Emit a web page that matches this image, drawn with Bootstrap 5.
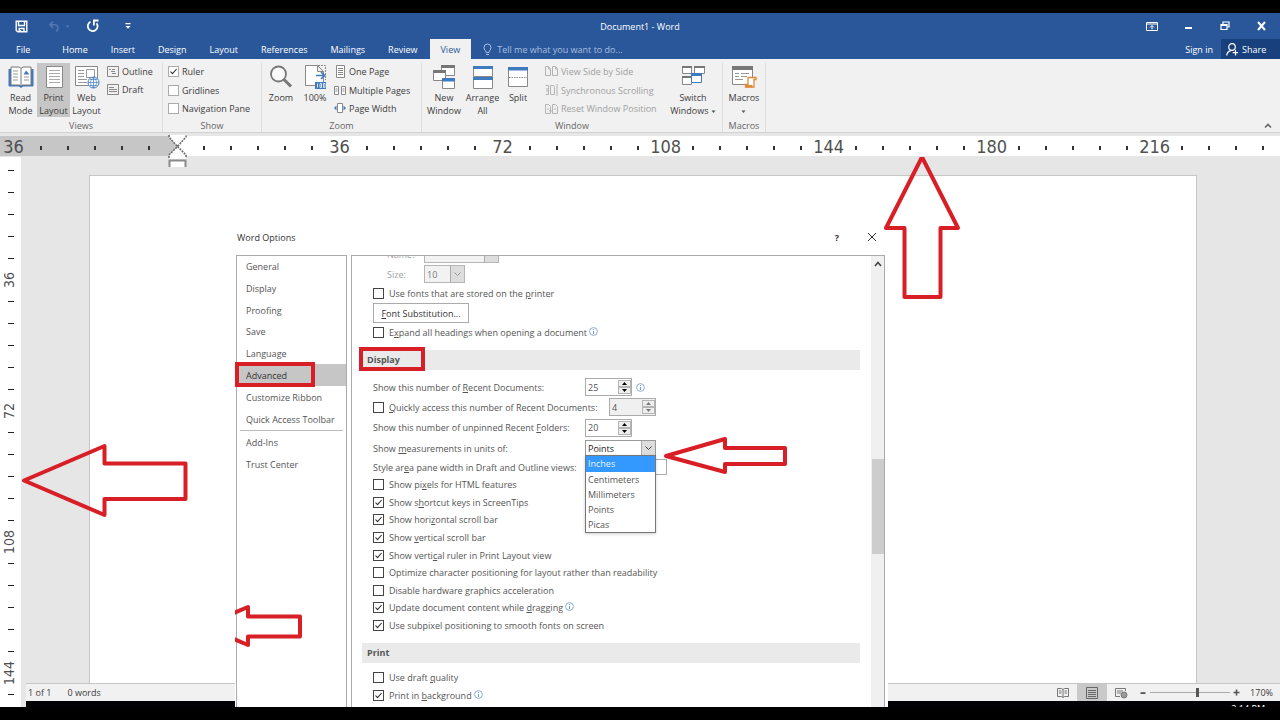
<!DOCTYPE html>
<html lang="en">
<head>
<meta charset="utf-8">
<meta name="viewport" content="width=device-width, initial-scale=1">
<title>Document1 - Word</title>
<link href="https://cdn.jsdelivr.net/npm/bootstrap@5.3.0/dist/css/bootstrap.min.css" rel="stylesheet">
<style>
:root{--blue:#2a579a;--ink:#3c3c3c;--soft:#555;--red:#d91f26}
body{font-family:"Open Sans","Noto Sans",sans-serif;font-size:9px;line-height:13px;color:var(--ink);background:#000;overflow:hidden}
button{color:inherit;line-height:inherit}
.app-shell{padding:13px 0;height:100vh}
/* title bar and tabs */
.title-bar,.tab-bar{background:var(--blue);color:#fff}
.title-bar{display:grid;grid-template-columns:1fr auto 1fr;height:26px}
.title-bar .plain{padding:0;border:0;background:none;display:flex}
.quick{gap:16px;padding-left:15px}
.undo-btn{width:26px;padding-left:4px!important}
.win-ctl{gap:25px;padding-right:12px}
.tab-bar{height:20px}
.tab-link{color:#fff;text-decoration:none;padding:0 11px 0 12px;display:flex;align-items:center}
.tab-link.file-tab{padding:0 20px 0 16px}
.tab-link.current{background:#f1f1f1;color:var(--blue);padding:0 11px;margin-left:1px}
.tell-box{gap:5px}
.tell{color:#a9bfdf;background:none;border:0;padding:0;width:180px;font-size:9px}
.tell::placeholder{color:#a9bfdf;opacity:1}
.share{background:#17407c;color:#fff;border:0;width:59px;padding:0 0 0 5px}
/* ribbon */
.ribbon{background:#f1f1f1;height:74px;border-bottom:1px solid #d2d2d2;flex:none}
.rib-group{border-right:1px solid #dcdcdc;margin:4px 0 0;display:flex;flex-direction:column;flex:none}
.rib-group>footer{text-align:center;color:#666;height:13px}
.rib-body{display:flex;flex:1 1 0;min-height:0}
.g-views{width:163px}.g-show{width:99px}.g-zoom{width:160px}.g-window{width:301px}.g-macros{width:43px}
.g-show .rib-body{padding-left:5px}
.big{border:0;background:none;padding:2px 0 0;text-align:center;display:flex;flex-direction:column;align-items:center;justify-content:flex-start;height:54px;flex:none;white-space:nowrap}
.big>svg{margin-bottom:2px;flex:none}
.big.on{background:#c6c6c6}
.w-33{width:33px}.w-38{width:38px}.w-44{width:44px}.w-30{width:30px}.w-58{width:58px}
.small-col{display:flex;flex-direction:column;height:56px;margin-top:-1px}
.small-col.two{height:37px}
.small-col>*{flex:1 1 0;display:flex;align-items:center;gap:3px;white-space:nowrap;border:0;background:none;padding:0;text-align:left}
.small-col input{appearance:none;width:11px;height:11px;border:1px solid #ababab;background:#fff;margin:0}
.small-col input:checked,.opt input:checked{background:#fff url("data:image/svg+xml,%3Csvg xmlns='http://www.w3.org/2000/svg' viewBox='0 0 9 9'%3E%3Cpath d='M1.5 4.5l2 2.2L7.6 2' fill='none' stroke='%23333' stroke-width='1.1'/%3E%3C/svg%3E") center/9px no-repeat}
.dim{color:#a0a0a0}
.collapse-btn{margin:0 8px 3px}
/* rulers */
.ruler-x{height:24px;padding:3px 0 1px;background:#e6e6e6;flex:none;position:relative;z-index:1}
.ruler-x .strip{display:flex;height:20px;overflow:hidden;background:linear-gradient(90deg,#c6c6c6 177px,#fff 177px)}
.seg-x{display:flex;width:163px;flex:none;color:#505050;font-family:"DejaVu Sans Condensed","DejaVu Sans",sans-serif;font-size:18px;line-height:18px;padding-top:2px}
.seg-x>*{flex:1 1 0;display:flex;justify-content:center;align-items:center;min-width:0;font-weight:400}
.seg-x i{width:2px;height:4px;background:#333;margin-top:2px}
.indent{position:absolute;left:168px;top:1px}
.ruler-y{width:21px;background:#fff;overflow:hidden;flex:none;padding-top:3px}
.seg-y{display:flex;flex-direction:column;height:131px;color:#505050;font-family:"DejaVu Sans Condensed","DejaVu Sans",sans-serif;font-size:14px;line-height:18px}
.seg-y>*{flex:1 1 0;min-height:0;display:flex;justify-content:center;align-items:center}
.seg-y b{writing-mode:vertical-rl;rotate:180deg;font-weight:400;margin-right:3px}
.seg-y i{width:6px;height:1px;background:#222}
/* workspace */
.work{position:relative;overflow:hidden;min-height:0}
.desk{background:#e6e6e6;padding:18px 83px 0 68px;min-height:0}
.sheet{background:#fff;border:1px solid #c6c6c6;border-bottom:0}
.status{background:#f1f1f1;border-top:1px solid #c6c6c6;height:18px;margin-left:5px;padding-left:2px;flex:none}
.task{height:6px;background:#020206;margin-left:5px;color:#fff;overflow:hidden;line-height:15px;padding-right:15px;flex:none}
.side-strip{background:#e6e6e6}
.status-tools{padding-right:7px}
.status button{border:0;background:none;padding:0}
.status button.view-on{background:#c9c9c9;width:30px}
.status .z-out{margin:0 4px 0 12px}
.status .z-in{margin:0 10px 0 3px}
.zoombar{appearance:none;background:linear-gradient(#aaa,#aaa) center/100% 1px no-repeat;width:80px;height:14px;margin:0}
.zoombar::-webkit-slider-thumb{appearance:none;width:3px;height:9px;background:#555}
/* options window */
.dlg{position:absolute;left:235px;top:71px;width:653px;bottom:0;background:#fff;color:var(--soft);overflow:hidden;padding:0 3px 0 1px}
.dlg-head{height:27px;color:#333;flex:none;padding:0 8px 9px 1px}
.dlg-head button{border:0;background:none;padding:0;display:flex}
.dlg-body{min-height:0}
.cats{width:111px;border:1px solid #ababab;border-bottom:0;flex:none}
.cats a{color:inherit;text-decoration:none;display:flex;align-items:center;padding-left:9px;height:22px;white-space:nowrap}
.cats .first{height:130px}
.cats .first a{flex:1 1 0;height:auto}
.cats a.sel{background:#c6c6c6;color:#333;position:relative}
.cats hr{margin:0 3px;border-color:#bbb;opacity:1}
.hi{position:absolute;border:4px solid var(--red)}
.hi-adv{left:-2px;top:-2px;width:80px;height:25px}
.hi-dis{left:-3px;top:-3px;width:66px;height:24px}
.pane{border:1px solid #ababab;border-bottom:0;margin-left:4px;min-width:0}
.opts{padding:0 11px 0 10px;overflow:hidden}
.opt{display:flex;align-items:center;height:20px;padding-left:11px;flex:none;white-space:nowrap}
.opt.h18{height:18px}
.opt.h21{height:21px}
.opt.scrolled{margin-top:-12px}
.opt input[type=checkbox]{appearance:none;width:11px;height:11px;border:1px solid #444;background-color:#fff;margin:0 5px 0 0;flex:none}
.opt svg.tip{margin:-2px 0 0 2px}
.sec{background:#eaeaea;height:20px;font-size:9px;line-height:19px;font-weight:700;padding-left:5px;margin:9px 0 7px;flex:none;position:relative}
.sec.tight{margin-bottom:5px}
.nine{height:158px;display:flex;flex-direction:column}
.nine .opt{flex:1 1 0;height:auto}
.lead-text{width:212px}
.quick-count{width:236px}
.font-lbl{width:51px;padding-left:14px}
.spin{display:flex;border:1px solid #ababab;width:47px;height:18px;background:#fff}
.spin input{border:0;background:none;padding:0 0 0 2px;width:32px;color:inherit;font-size:9px;min-width:0}
.spin .arrows{display:flex;flex-direction:column;width:13px;padding:1px 0}
.spin button{border:1px solid #b4b4b4;background:#eee;flex:1 1 0;padding:0;line-height:0;min-height:0;display:flex;align-items:center;justify-content:center}
.spin.off{background:#f0f0f0}
.combo{position:relative;display:flex}
.combo select{appearance:none;border:1px solid #999;border-radius:0;background:#fff;color:#222;font-size:9px;padding:0 0 0 2px;width:71px;height:16px}
.combo .drop{position:absolute;right:1px;top:1px;bottom:1px;width:14px;background:#ddd;border-left:1px solid #aaa;display:flex;align-items:center;justify-content:center;pointer-events:none}
.combo select:disabled{background:#f2f2f2;color:#777;border-color:#b5b5b5;opacity:1;height:18px}
.combo .sel-name{width:75px}
.combo .sel-size{width:41px}
.menu{position:absolute;left:0;top:15px;width:71px;border:1px solid #777;background:#fff;z-index:2;list-style:none;margin:0;padding:0;box-shadow:0 1px 3px #0003}
.menu li{height:15px;line-height:15px;padding-left:2px}
.menu li.act{background:#3399ff;color:#e8f3ff;height:16px;line-height:16px}
.width-box{border:1px solid #ababab;width:82px;height:16px;padding:0}
.fsub{border:1px solid #ababab;background:#fff;color:#333;height:20px;width:96px;padding:0;margin:1px 0 0 11px;flex:none}
.bar{width:13px;background:#f0f0f0;flex:none;display:flex;flex-direction:column;align-items:center;padding-top:5px}
.bar .thumb{height:95px;width:12px;background:#cdcdcd;margin-top:192px}
/* red call-out arrows drawn over the windows */
.note-arrow{position:absolute;fill:none;stroke:var(--red);stroke-width:4;stroke-linejoin:round;pointer-events:none;z-index:3}
.na-nav{left:0;top:374px}
.na-menu{left:427px;top:207px}
.na-left{left:20px;top:284px}
.na-up{left:880px;top:-4px}
u{text-underline-offset:1px}
</style>
</head>
<body>
<div class="app-shell d-flex flex-column">
<header class="flex-shrink-0">
 <div class="title-bar align-items-center">
  <div class="quick d-flex align-items-center">
   <button class="plain" aria-label="Save"><svg width="13" height="13" viewBox="0 0 13 13" fill="none" stroke="#fff" stroke-width="1.4"><path d="M1.2 1.2h10.600v10.600h-9L1.200 10.500zM3.500 1.500v4h6v-4M4.200 12V8.500h4.800V12"/><path d="M5.500 10v2"/></svg></button>
   <button class="plain undo-btn" aria-label="Undo"><svg width="24" height="13" viewBox="0 0 24 13" fill="none" stroke="#5578b2" stroke-width="1.600"><path d="M5.500 1L2 4.500l3.500 3.500M2 4.500h5c5 0 5 6 1.500 7"/><path d="M19.500 5.500h4l-2 2.300z" fill="#5578b2" stroke="none"/></svg></button>
   <button class="plain" aria-label="Redo"><svg width="14" height="14" viewBox="0 0 14 14" fill="none" stroke="#fff" stroke-width="1.800"><path d="M4.500 2.800A4.900 4.900 0 1 0 10.600 4.200M12.500 1.500H7.900v5"/></svg></button>
   <button class="plain ms-2" aria-label="Customize"><svg width="8" height="8" viewBox="0 0 8 8" fill="#fff"><path d="M1.500 1h5v1.200h-5zM1.500 4h5L4 6.800z"/></svg></button>
  </div>
  <div>Document1 - Word</div>
  <div class="win-ctl d-flex align-items-center justify-content-end">
   <button class="plain" aria-label="Ribbon display"><svg width="12" height="9" viewBox="0 0 12 9" fill="none" stroke="#fff"><path d="M.5.5h11v8H.5zM.5 2h11M6 7.500V4M4 5.500l2-2 2 2"/></svg></button>
   <button class="plain" aria-label="Minimize"><svg width="12" height="9" viewBox="0 0 12 9"><path d="M2 5h7v2H2z" fill="#fff"/></svg></button>
   <button class="plain" aria-label="Restore"><svg width="10" height="10" viewBox="0 0 10 10" fill="none" stroke="#fff" stroke-width="1.200"><path d="M1 3.500h6v5H1zM3 3V1h6v5H7.500M1 4.500h6"/></svg></button>
   <button class="plain" aria-label="Close"><svg width="13" height="10" viewBox="0 0 13 10" stroke="#fff" stroke-width="2"><path d="M3 1l7 8M10 1L3 9"/></svg></button>
  </div>
 </div>
 <nav class="tab-bar d-flex">
  <a class="tab-link file-tab" href="#">File</a><a class="tab-link" href="#">Home</a><a class="tab-link" href="#">Insert</a><a class="tab-link" href="#">Design</a><a class="tab-link" href="#">Layout</a><a class="tab-link" href="#">References</a><a class="tab-link" href="#">Mailings</a><a class="tab-link" href="#">Review</a><a class="tab-link current" href="#">View</a>
  <label class="tell-box d-flex align-items-center ms-2 ps-1"><svg width="9" height="13" viewBox="0 0 9 13" fill="none" stroke="#a9bfdf"><path d="M3 9.500C3 7.500 1 7 1 4.500a3.500 3.500 0 0 1 7 0C8 7 6 7.500 6 9.500zM3 11.500h3"/></svg><input class="tell" placeholder="Tell me what you want to do..." aria-label="Tell me what you want to do"></label>
  <a class="tab-link ms-auto px-2" href="#">Sign in</a>
  <button class="share d-flex align-items-center gap-1"><svg width="12" height="13" viewBox="0 0 12 13" fill="none" stroke="#fff" stroke-width="1.200"><circle cx="6" cy="4" r="3.300"/><path d="M.7 12.500C1 9 3 8 5 7.600M9.500 7v5.500M6.700 9.700h5.300"/></svg>Share</button>
 </nav>
 <div class="ribbon d-flex">
  <section class="rib-group g-views">
   <div class="rib-body">
    <button class="big w-33 ms-1"><svg width="26" height="24" viewBox="0 0 26 24" fill="#fff" stroke="#777"><path d="M1 4v17h10l2 1.500 2-1.500h10V4" fill="#3f7ac0" stroke="#3f7ac0"/><path d="M3 2h8l2 1.500L15 2h8v18h-8.500L13 21l-1.500-1H3zM13 4v16"/><path d="M5 6h5M5 9h5M5 12h5M5 15h5M16 12h5M16 15h5" stroke="#999"/><path d="M15.500 9.500l2.500-4 3.500 4z" fill="#3f7ac0" stroke="none"/></svg><span>Read<br>Mode</span></button>
    <button class="big on w-33"><svg width="20" height="24" viewBox="0 0 20 24" fill="#fff" stroke="#888"><path d="M2.500 1.500h16v21h-16z"/><path d="M5 5.500h11M5 8.500h11M5 11.500h11M5 14.500h11M5 17.500h11" stroke="#aaa"/></svg><span>Print<br>Layout</span></button>
    <button class="big w-33"><svg width="26" height="24" viewBox="0 0 26 24" fill="#fff" stroke="#888"><path d="M1.500 1.500h22v19h-22z"/><path d="M4 5.500h6M4 8.500h6M4 11.500h6M4 14.500h9M4 17.500h9" stroke="#999"/><path d="M12.500 4.500h8v8h-8z" stroke="#999"/><circle cx="19.500" cy="17.500" r="5.500" stroke="#3f7ac0"/><path d="M14 17.500h11M19.500 12v11M16 14.500h7M16 20.500h7M19.500 12c-4 4-4 7 0 11M19.500 12c4 4 4 7 0 11" fill="none" stroke="#3f7ac0" stroke-width=".7"/></svg><span>Web<br>Layout</span></button>
    <div class="small-col two ms-1">
     <button><svg width="12" height="11" viewBox="0 0 12 11" fill="none" stroke="#888"><path d="M.5.5h11v10H.5zM2 3.500h2M4 5.500h4M5 7.500h4M5 3.500h3"/></svg>Outline</button>
     <button><svg width="12" height="11" viewBox="0 0 12 11" fill="none" stroke="#888"><path d="M.5.5h11v10H.5zM2 3.500h5M2 5.500h8M2 7.500h8"/></svg>Draft</button>
    </div>
   </div><footer>Views</footer>
  </section>
  <section class="rib-group g-show">
   <div class="rib-body"><div class="small-col">
    <label><input type="checkbox" checked>Ruler</label><label><input type="checkbox">Gridlines</label><label><input type="checkbox">Navigation Pane</label>
   </div></div><footer>Show</footer>
  </section>
  <section class="rib-group g-zoom">
   <div class="rib-body">
    <button class="big w-38"><svg width="24" height="24" viewBox="0 0 24 24" fill="#fafafa" stroke="#777"><circle cx="9.500" cy="9" r="7.500" stroke-width="1.800"/><path d="M15 14.500l7 7" stroke-width="3"/></svg><span>Zoom</span></button>
    <button class="big w-30"><svg width="23" height="24" viewBox="0 1 23 24" fill="#fff" stroke="#888"><path d="M1.500 1.500h12l6 6v14h-18zM13.500 1.500v6h6"/><path d="M14 1.500h7.500V16" fill="none" stroke-dasharray="2 1"/><path d="M12 11.500h8M17 8l3.500 3.500L17 15" fill="none" stroke="#3f7ac0" stroke-width="1.700"/><path d="M11 18h11v7H11z" fill="#3f7ac0" stroke="none"/><path d="M13.500 19.500v4M16 19.500h1.500v4H16zM19.500 19.500H21v4h-1.500z" fill="none" stroke="#fff" stroke-width=".8"/></svg><span>100%</span></button>
    <div class="small-col ms-1">
     <button><svg width="12" height="13" viewBox="0 0 12 13" fill="#fff" stroke="#888"><path d="M2.500.5h8v12h-8zM4 3.500h5M4 5.500h5M4 7.500h5M4 9.500h5"/></svg>One Page</button>
     <button><svg width="12" height="11" viewBox="0 0 12 11" fill="#fff" stroke="#888"><path d="M.5 1.500h4v8h-4zM7.500 1.500h4v8h-4zM1.500 4h2M1.500 6h2M8.500 4h2M8.500 6h2"/></svg>Multiple Pages</button>
     <button><svg width="12" height="11" viewBox="0 0 12 11" fill="#fff" stroke="#888"><path d="M3.500.500h5v9h-5z"/><path d="M0 5l2.500-2.500v5zM12 5L9.500 2.500v5z" fill="#3f7ac0" stroke="none"/></svg>Page Width</button>
    </div>
   </div><footer>Zoom</footer>
  </section>
  <section class="rib-group g-window">
   <div class="rib-body">
    <button class="big w-44"><svg width="24" height="24" viewBox="0 1 24 24" fill="#fff" stroke="#888"><path d="M9.500 2.500h13v9h-13z"/><path d="M9 1h14v3H9z" fill="#777" stroke="none"/><path d="M1.500 7.500h12v9h-12z"/><path d="M1 6h13v3H1z" fill="#777" stroke="none"/><path d="M10.500 15.500h12v9h-12z"/><path d="M10 14h13v3.500H10z" fill="#3f7ac0" stroke="none"/></svg><span>New<br>Window</span></button>
    <button class="big w-33"><svg width="20" height="24" viewBox="0 0 20 24" fill="#fff" stroke="#888"><path d="M.5 1.500h19v10H.5zM.5 13.500h19v10H.5z"/><path d="M0 1h20v3H0zM0 12h20v3H0z" fill="#3f7ac0" stroke="none"/></svg><span>Arrange<br>All</span></button>
    <button class="big w-38"><svg width="20" height="24" viewBox="0 0 20 24" fill="#fff" stroke="#888"><path d="M.5 2.500h19v19H.5z"/><path d="M0 2h20v3.500H0z" fill="#3f7ac0" stroke="none"/><path d="M1 12.500h18" stroke-dasharray="1.500 1"/></svg><span>Split</span></button>
    <div class="small-col dim ms-2">
     <button><svg width="13" height="10" viewBox="0 0 13 10" fill="none" stroke="#b4b4b4"><path d="M.5.500h3l2 2v7h-5zM7.500.500h3l2 2v7h-5zM3.500 1v2h2M10.500 1v2h2"/></svg>View Side by Side</button>
     <button><svg width="13" height="12" viewBox="0 0 13 12" fill="none" stroke="#b4b4b4"><path d="M.5 1.500h3v9h-3M5.500 1.500h3l1 2v7h-4zM12 0v12M2 4v4"/></svg>Synchronous Scrolling</button>
     <button><svg width="13" height="10" viewBox="0 0 13 10" fill="none" stroke="#b4b4b4"><path d="M.5.500h3l2 2v7h-5zM7.500.500h3l2 2v7h-5zM2 5h2M9 5h2M4 7h4"/></svg>Reset Window Position</button>
    </div>
    <button class="big ms-auto w-58"><svg width="24" height="24" viewBox="0 0 24 24" fill="#fff" stroke="#888"><path d="M1.500 1.500h9v7h-9zM13.500 1.500h10v7h-10zM1.500 12.500h9v7h-9z"/><path d="M1 1h10v2H1zM13 1h11v2H13zM1 11h10v2H1z" fill="#777" stroke="none"/><path d="M10.500 9.500h10v8h-10z" stroke="#3f7ac0"/><path d="M10 8h11v3H10z" fill="#3f7ac0" stroke="none"/></svg><span>Switch<br>Windows <svg width="5" height="6" viewBox="0 0 5 6"><path d="M.5 1.500h4L2.500 4z" fill="#555"/></svg></span></button>
   </div><footer>Window</footer>
  </section>
  <section class="rib-group g-macros">
   <div class="rib-body"><button class="big w-100"><svg width="26" height="24" viewBox="0 0 26 24" fill="#fff" stroke="#888"><path d="M1.500 1.500h20v18h-20z"/><path d="M1 1h21v4H1z" fill="#777" stroke="none"/><path d="M4 8.500h4M10 8.500h8M4 11.500h4M10 11.500h6M4 14.500h8" stroke="#999"/><path d="M17 12.500h8v2h-2v7.500h-8.500v-2.500H17z" fill="#fff" stroke="#e08a3c" stroke-width="1.300"/><path d="M14.500 20h7v2.500h-7z" fill="#e08a3c" stroke="none"/></svg><span>Macros<br><svg width="5" height="6" viewBox="0 0 5 6"><path d="M.5 1.500h4L2.500 4z" fill="#555"/></svg></span></button></div><footer>Macros</footer>
  </section>
  <button class="collapse-btn border-0 bg-transparent p-0 ms-auto align-self-end d-flex" aria-label="Collapse ribbon"><svg width="8" height="7" viewBox="0 0 8 7" fill="none" stroke="#666" stroke-width="1.600"><path d="M1 5.500l3-3 3 3"/></svg></button>
 </div>
</header>

<div class="ruler-x" aria-hidden="true">
 <div class="strip">
  <div class="seg-x"><b>36</b><span><i></i></span><span><i></i></span><span><i></i></span><span><i></i></span><span><i></i></span></div>
  <div class="seg-x"><b></b><span><i></i></span><span><i></i></span><span><i></i></span><span><i></i></span><span><i></i></span></div>
  <div class="seg-x"><b>36</b><span><i></i></span><span><i></i></span><span><i></i></span><span><i></i></span><span><i></i></span></div>
  <div class="seg-x"><b>72</b><span><i></i></span><span><i></i></span><span><i></i></span><span><i></i></span><span><i></i></span></div>
  <div class="seg-x"><b>108</b><span><i></i></span><span><i></i></span><span><i></i></span><span><i></i></span><span><i></i></span></div>
  <div class="seg-x"><b>144</b><span><i></i></span><span><i></i></span><span><i></i></span><span><i></i></span><span><i></i></span></div>
  <div class="seg-x"><b>180</b><span><i></i></span><span><i></i></span><span><i></i></span><span><i></i></span><span><i></i></span></div>
  <div class="seg-x"><b>216</b><span><i></i></span><span><i></i></span><span><i></i></span><span><i></i></span><span><i></i></span></div>
 </div>
 <svg class="indent" width="19" height="34" viewBox="0 0 19 34"><path d="M1 1h17v2l-8.500 10L18 21v4H1v-4l8.500-8L1 3z" fill="#fff"/><path d="M1 1v2l8.500 9.500L18 3V1M1 24v-3l8.500-8.500L18 21v3" fill="none" stroke="#666" stroke-width="1.500" stroke-dasharray="2 1"/><path d="M1.500 33v-6.500h16V33" fill="#fff" stroke="#8a8a8a" stroke-width="2"/></svg>
</div>

<main class="work d-flex flex-grow-1">
 <div class="ruler-y" aria-hidden="true">
  <div class="seg-y"><span><i></i></span><span><i></i></span><span><i></i></span><span><i></i></span><span><i></i></span><span><b>36</b></span></div>
  <div class="seg-y"><span><i></i></span><span><i></i></span><span><i></i></span><span><i></i></span><span><i></i></span><span><b>72</b></span></div>
  <div class="seg-y"><span><i></i></span><span><i></i></span><span><i></i></span><span><i></i></span><span><i></i></span><span><b>108</b></span></div>
  <div class="seg-y"><span><i></i></span><span><i></i></span><span><i></i></span><span><i></i></span><span><i></i></span><span><b>144</b></span></div>
  <div class="seg-y"><span><i></i></span><span></span><span></span><span></span><span></span><span></span></div>
 </div>
 <div class="side-strip flex-grow-1 d-flex flex-column">
  <div class="desk flex-grow-1 d-flex"><div class="sheet flex-grow-1"></div></div>
  <div class="status d-flex align-items-stretch">
   <span class="align-self-center">1 of 1</span><span class="align-self-center ms-3">0 words</span>
   <div class="status-tools ms-auto d-flex align-items-center">
    <button aria-label="Read mode"><svg width="12" height="12" viewBox="0 0 12 12" fill="none" stroke="#777"><path d="M.5 1.500h4l1.500 1 1.500-1h4v8h-4L6 10.500l-1.500-1h-4zM6 2.500v8M2 4h2.500M2 6h2.500M7.500 4H10M7.500 6H10"/></svg></button>
    <button class="view-on align-self-stretch ms-2 me-2" aria-label="Print layout"><svg width="12" height="12" viewBox="0 0 12 12" fill="none" stroke="#666"><path d="M.5.500h11v11H.5zM2 3.500h8M2 5.500h8M2 7.500h8M2 9.500h8"/></svg></button>
    <button aria-label="Web layout"><svg width="13" height="12" viewBox="0 0 13 12" fill="none" stroke="#777"><path d="M5 9.500H.5v-8h10V4M2 4h6M2 6h4"/><circle cx="9" cy="8" r="3" fill="#999"/></svg></button>
    <button class="z-out d-flex" aria-label="Zoom out"><svg width="6" height="8" viewBox="0 0 6 8"><path d="M.5 3.200h5v1.800h-5z" fill="#555"/></svg></button>
    <input class="zoombar" type="range" aria-label="Zoom" value="59">
    <button class="z-in d-flex" aria-label="Zoom in"><svg width="7" height="7" viewBox="0 0 7 7" stroke="#555" stroke-width="1.600"><path d="M.5 3.500h6M3.500.5v6"/></svg></button>
    <span>170%</span>
   </div>
  </div>
  <div class="task text-end">2:14 PM</div>
 </div>

 <section class="dlg d-flex flex-column" role="dialog" aria-label="Word Options">
  <div class="dlg-head d-flex align-items-center"><span class="me-auto">Word Options</span>
   <button class="fw-bold me-4" aria-label="Help">?</button>
   <button class="ms-1" aria-label="Close"><svg width="10" height="10" viewBox="0 0 10 10" stroke="#333"><path d="M1 1l8 8M9 1L1 9"/></svg></button></div>
  <div class="dlg-body d-flex flex-grow-1">
   <nav class="cats">
    <div class="first d-flex flex-column"><a href="#">General</a><a href="#">Display</a><a href="#">Proofing</a><a href="#">Save</a><a href="#">Language</a><a href="#" class="sel">Advanced<span class="hi hi-adv"></span></a></div>
    <a href="#">Customize Ribbon</a><a href="#">Quick Access Toolbar</a><hr><a href="#">Add-Ins</a><a href="#">Trust Center</a>
   </nav>
   <div class="pane flex-grow-1 d-flex">
    <div class="opts flex-grow-1 d-flex flex-column">
     <div class="opt scrolled dim"><label class="font-lbl" for="nm">Name:</label><div class="combo"><select class="sel-name" id="nm" disabled><option></option></select><span class="drop"></span></div></div>
     <div class="opt dim"><label class="font-lbl" for="sz">Size:</label><div class="combo"><select class="sel-size" id="sz" disabled><option>10</option></select><span class="drop"><svg width="7" height="5" viewBox="0 0 7 5" fill="none" stroke="#999"><path d="M.5.500l3 3 3-3"/></svg></span></div></div>
     <label class="opt h18"><input type="checkbox"><span>Use fonts that are stored on the <u>p</u>rinter</span></label>
     <button class="fsub"><u>F</u>ont Substitution...</button>
     <label class="opt h18"><input type="checkbox"><span>E<u>x</u>pand all headings when opening a document</span><svg class="tip" width="9" height="9" viewBox="0 0 9 9" fill="none" stroke="#6f9bd1"><circle cx="4.500" cy="4.500" r="3.900" stroke-width=".8"/><path d="M4.500 2v1M4.500 4v3"/></svg></label>
     <h2 class="sec">Display<span class="hi hi-dis"></span></h2>
     <div class="opt"><label class="lead-text" for="rd">Show this number of <u>R</u>ecent Documents:</label><div class="spin"><input id="rd" value="25"><span class="arrows"><button aria-label="Up"><svg width="5" height="3"><path d="M0 3h5L2.500 0z"/></svg></button><button aria-label="Down"><svg width="5" height="3"><path d="M0 0h5L2.500 3z"/></svg></button></span></div><svg class="ms-1" width="9" height="9" viewBox="0 0 9 9" fill="none" stroke="#6f9bd1"><circle cx="4.500" cy="4.500" r="3.900" stroke-width=".8"/><path d="M4.500 2v1M4.500 4v3"/></svg></div>
     <div class="opt"><label class="quick-count d-flex align-items-center"><input type="checkbox"><span><u>Q</u>uickly access this number of Recent Documents:</span></label><div class="spin off"><input value="4" aria-label="Quick access count" disabled><span class="arrows"><button disabled aria-label="Up"><svg width="5" height="3" fill="#777"><path d="M0 3h5L2.500 0z"/></svg></button><button disabled aria-label="Down"><svg width="5" height="3" fill="#777"><path d="M0 0h5L2.500 3z"/></svg></button></span></div></div>
     <div class="opt h21"><label class="lead-text" for="rf">Show this number of unpinned Recent <u>F</u>olders:</label><div class="spin"><input id="rf" value="20"><span class="arrows"><button aria-label="Up"><svg width="5" height="3"><path d="M0 3h5L2.500 0z"/></svg></button><button aria-label="Down"><svg width="5" height="3"><path d="M0 0h5L2.500 3z"/></svg></button></span></div></div>
     <div class="opt"><label class="lead-text" for="un">Show <u>m</u>easurements in units of:</label><div class="combo"><select id="un"><option>Points</option></select><span class="drop"><svg width="7" height="5" viewBox="0 0 7 5" fill="none" stroke="#444"><path d="M.5.500l3 3 3-3"/></svg></span>
      <ul class="menu"><li class="act">Inches</li><li>Centimeters</li><li>Millimeters</li><li>Points</li><li>Picas</li></ul></div></div>
     <div class="opt h18"><label class="lead-text" for="sa">Style ar<u>e</u>a pane width in Draft and Outline views:</label><input id="sa" class="width-box"></div>
     <div class="nine">
      <label class="opt"><input type="checkbox"><span>Show pi<u>x</u>els for HTML features</span></label>
      <label class="opt"><input type="checkbox" checked><span>Show s<u>h</u>ortcut keys in ScreenTips</span></label>
      <label class="opt"><input type="checkbox" checked><span>Show hori<u>z</u>ontal scroll bar</span></label>
      <label class="opt"><input type="checkbox" checked><span>Show <u>v</u>ertical scroll bar</span></label>
      <label class="opt"><input type="checkbox" checked><span>Show verti<u>c</u>al ruler in Print Layout view</span></label>
      <label class="opt"><input type="checkbox"><span>Optimize character positioning for layout rather than readability</span></label>
      <label class="opt"><input type="checkbox"><span>Disable hardware <u>g</u>raphics acceleration</span></label>
      <label class="opt"><input type="checkbox" checked><span>Update document content while <u>d</u>ragging</span><svg class="tip" width="9" height="9" viewBox="0 0 9 9" fill="none" stroke="#6f9bd1"><circle cx="4.500" cy="4.500" r="3.900" stroke-width=".8"/><path d="M4.500 2v1M4.500 4v3"/></svg></label>
      <label class="opt"><input type="checkbox" checked><span>Use subpixel positioning to smooth fonts on screen</span></label>
     </div>
     <h2 class="sec tight">Print</h2>
     <label class="opt h18"><input type="checkbox"><span>Use draft <u>q</u>uality</span></label>
     <label class="opt h18"><input type="checkbox" checked><span>Print in <u>b</u>ackground</span><svg class="tip" width="9" height="9" viewBox="0 0 9 9" fill="none" stroke="#6f9bd1"><circle cx="4.500" cy="4.500" r="3.900" stroke-width=".8"/><path d="M4.500 2v1M4.500 4v3"/></svg></label>
    </div>
    <div class="bar"><svg width="8" height="6" viewBox="0 0 8 6" fill="none" stroke="#444" stroke-width="1.600"><path d="M1 5l3-3.500L7 5"/></svg><div class="thumb"></div></div>
   </div>
  </div>
  <svg class="note-arrow na-nav" width="70" height="48"><path d="M-6 13L13 5v9.500h52v20H13V43L-6 35"/></svg>
  <svg class="note-arrow na-menu" width="130" height="44"><path d="M4 21L63 4v9h60v16H63v8z"/></svg>
 </section>
 <svg class="note-arrow na-left" width="172" height="82"><path d="M4 39.500L84.500 5v17.500h81v35.500h-81V74z"/></svg>
 <svg class="note-arrow na-up overflow-visible" width="84" height="150"><path d="M42 4L6 75h18.500v69h36V75H78z"/></svg>
</main>
</div>
<script src="https://cdn.jsdelivr.net/npm/bootstrap@5.3.0/dist/js/bootstrap.bundle.min.js"></script>
</body>
</html>
